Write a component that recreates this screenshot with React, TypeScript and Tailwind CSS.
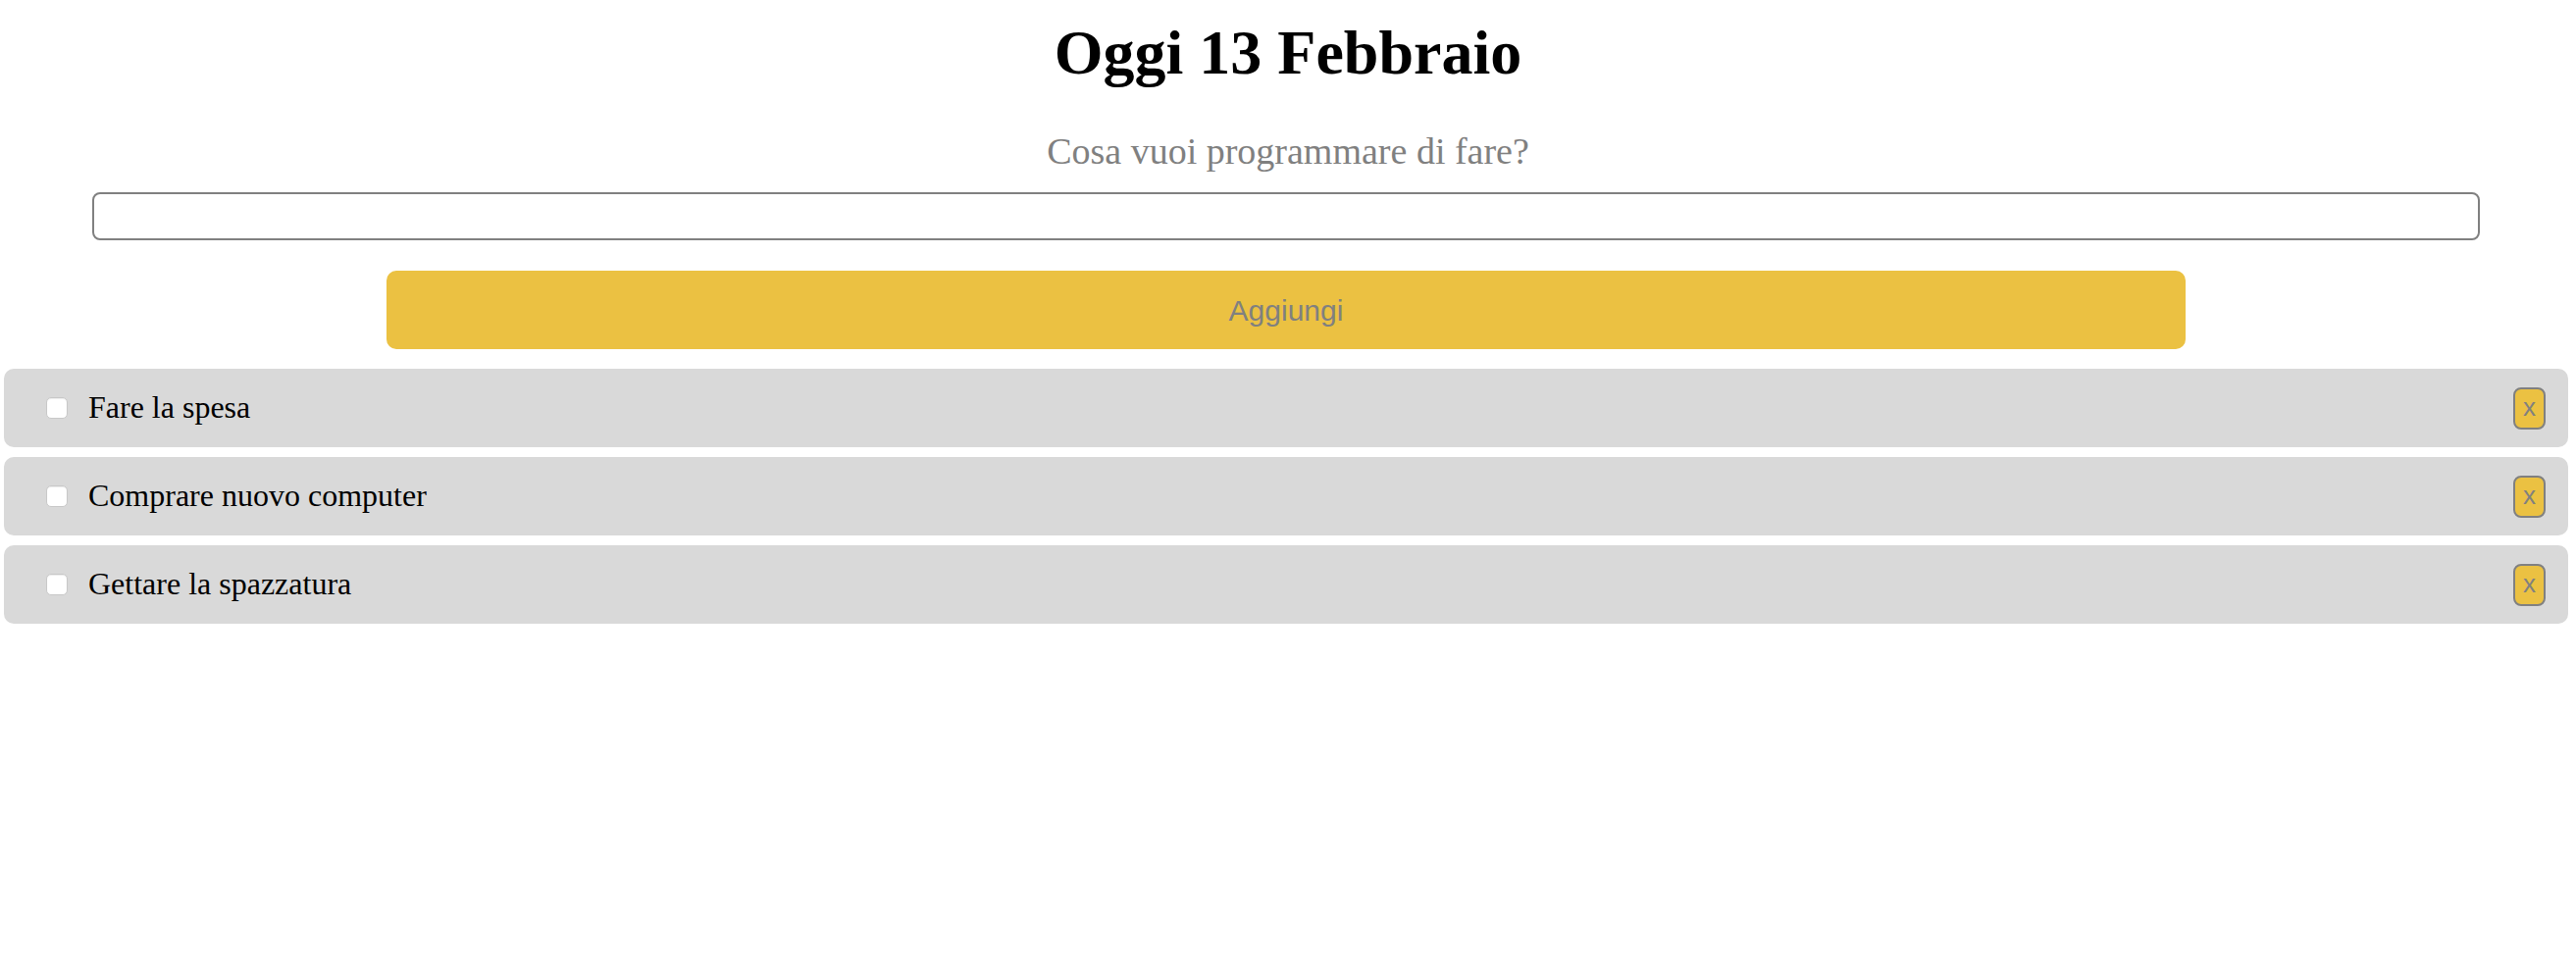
import React, { useState } from 'react';

interface Todo {
  id: number;
  text: string;
  done: boolean;
}

const initialTodos: Todo[] = [
  { id: 1, text: 'Fare la spesa', done: false },
  { id: 2, text: 'Comprare nuovo computer', done: false },
  { id: 3, text: 'Gettare la spazzatura', done: false },
];

const serif = "font-['Liberation_Serif','Times_New_Roman',serif]";
const sans = "font-['Liberation_Sans',Arial,sans-serif]";

const App = () => {
  const [todos, setTodos] = useState<Todo[]>(initialTodos);
  const [text, setText] = useState('');

  const addTodo = () => {
    if (!text.trim()) return;
    setTodos([...todos, { id: Date.now(), text, done: false }]);
    setText('');
  };

  return (
    <div className={`w-[2626px] min-h-[984px] bg-white text-black ${serif}`}>
      <h1 className="mt-[22px] text-center text-[64px] leading-[64px] font-bold">Oggi 13 Febbraio</h1>
      <p className="mt-[49px] text-center text-[38px] leading-[38px] text-[#808080]">Cosa vuoi programmare di fare?</p>
      <input
        type="text"
        value={text}
        onChange={(e) => setText(e.target.value)}
        className="block mt-[23px] ml-[94px] w-[2434px] h-[49px] border-2 border-[#808080] rounded-[8px] px-3 text-[28px] outline-none"
      />
      <button
        type="button"
        onClick={addTodo}
        className={`block mt-[31px] ml-[394px] w-[1834px] h-[80px] rounded-[10px] bg-[#ebc142] text-[30px] text-[#808080] ${sans}`}
      >
        Aggiungi
      </button>
      <div className="mt-[20px] ml-[4px] w-[2614px] flex flex-col gap-[10px]">
        {todos.map((t) => (
          <div key={t.id} className="h-[80px] flex items-center bg-[#d9d9d9] rounded-[10px] pl-[43px] pr-[23px]">
            <input
              type="checkbox"
              checked={t.done}
              onChange={() => setTodos(todos.map((x) => (x.id === t.id ? { ...x, done: !x.done } : x)))}
              className="appearance-none w-[22px] h-[22px] bg-white border border-[#c8c8c8] rounded-[5px] shadow-[inset_0_1px_1px_rgba(0,0,0,0.08)] checked:bg-[#3b82f6]"
            />
            <span className={`ml-[21px] text-[32px] leading-[40px] pb-[2px] ${t.done ? 'line-through' : ''}`}>{t.text}</span>
            <button
              type="button"
              onClick={() => setTodos(todos.filter((x) => x.id !== t.id))}
              className={`ml-auto w-[33px] h-[43px] flex items-center justify-center border-2 border-[#808080] rounded-[8px] bg-[#ebc142] text-[26px] leading-none text-[#808080] pb-[3px] ${sans}`}
            >
              x
            </button>
          </div>
        ))}
      </div>
    </div>
  );
};

export default App;
